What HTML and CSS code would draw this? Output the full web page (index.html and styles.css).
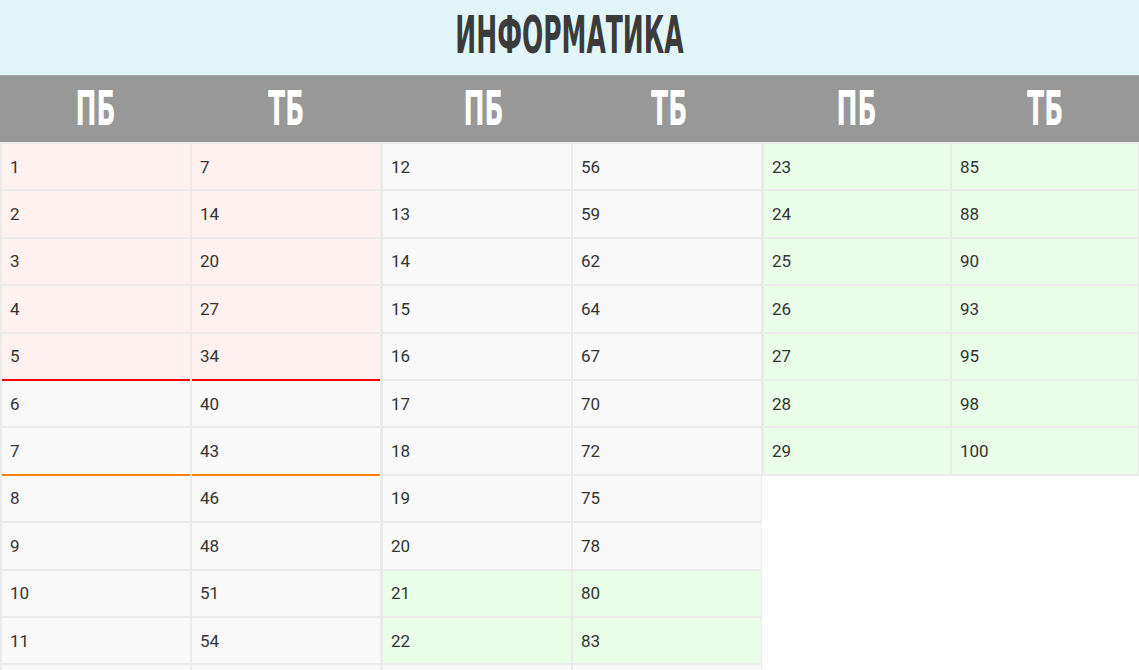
FILE: index.html
```html
<!DOCTYPE html>
<html lang="ru">
<head>
<meta charset="utf-8">
<title>Информатика</title>
<link rel="stylesheet" href="styles.css">
</head>
<body>
<header class="title-bar"><h1 class="title"><span class="squeeze squeeze--title">ИНФОРМАТИКА</span></h1></header>
<div class="head-row">
  <div class="head-group"><div class="head-cell"><span class="squeeze">ПБ</span></div><div class="head-cell"><span class="squeeze">ТБ</span></div></div>
  <div class="head-group head-group--mid"><div class="head-cell"><span class="squeeze">ПБ</span></div><div class="head-cell"><span class="squeeze">ТБ</span></div></div>
  <div class="head-group head-group--last"><div class="head-cell"><span class="squeeze">ПБ</span></div><div class="head-cell"><span class="squeeze">ТБ</span></div></div>
</div>
<main class="tables">
  <div class="tbl">
    <div class="c pink">1</div><div class="c pink">7</div>
    <div class="c pink">2</div><div class="c pink">14</div>
    <div class="c pink">3</div><div class="c pink">20</div>
    <div class="c pink">4</div><div class="c pink">27</div>
    <div class="c pink red-line">5</div><div class="c pink red-line">34</div>
    <div class="c">6</div><div class="c">40</div>
    <div class="c orange-line">7</div><div class="c orange-line">43</div>
    <div class="c">8</div><div class="c">46</div>
    <div class="c">9</div><div class="c">48</div>
    <div class="c">10</div><div class="c">51</div>
    <div class="c">11</div><div class="c">54</div>
    <div class="c"></div><div class="c"></div>
  </div>
  <div class="tbl">
    <div class="c">12</div><div class="c">56</div>
    <div class="c">13</div><div class="c">59</div>
    <div class="c">14</div><div class="c">62</div>
    <div class="c">15</div><div class="c">64</div>
    <div class="c">16</div><div class="c">67</div>
    <div class="c">17</div><div class="c">70</div>
    <div class="c">18</div><div class="c">72</div>
    <div class="c">19</div><div class="c">75</div>
    <div class="c">20</div><div class="c">78</div>
    <div class="c green">21</div><div class="c green">80</div>
    <div class="c green">22</div><div class="c green">83</div>
    <div class="c"></div><div class="c"></div>
  </div>
  <div class="tbl tbl--last">
    <div class="c green">23</div><div class="c green">85</div>
    <div class="c green">24</div><div class="c green">88</div>
    <div class="c green">25</div><div class="c green">90</div>
    <div class="c green">26</div><div class="c green">93</div>
    <div class="c green">27</div><div class="c green">95</div>
    <div class="c green">28</div><div class="c green">98</div>
    <div class="c green">29</div><div class="c green">100</div>
  </div>
</main>
</body>
</html>
```

FILE: styles.css
```css
*, *::before, *::after { box-sizing: border-box; }
html { overflow: hidden; }
body {
  margin: 0;
  background: #ffffff;
  font-family: Roboto, "Liberation Sans", sans-serif;
}
.title-bar {
  height: 76px;
  background: #e2f6f9;
  display: flex;
  align-items: center;
  justify-content: center;
  border-bottom: 1px solid #9fa9aa;
}
.title {
  margin: 0 0 4px;
  font-family: "DejaVu Sans Condensed", "DejaVu Sans", sans-serif;
  font-weight: bold;
  font-size: 51px;
  line-height: 1;
  color: #3b3b3b;
}
.squeeze {
  display: inline-block;
  transform: scaleX(0.58);
}
.squeeze--title { transform: scaleX(0.545); }
.head-row {
  height: 66px;
  background: #989898;
  display: flex;
}
.head-group {
  flex: 0 0 381px;
  display: flex;
}
.head-group--mid { padding-left: 10px; }
.head-group--last { flex: 1 1 auto; }
.head-cell {
  flex: 1;
  display: flex;
  align-items: center;
  justify-content: center;
  font-family: "DejaVu Sans Condensed", "DejaVu Sans", sans-serif;
  font-weight: bold;
  font-size: 48px;
  color: #ffffff;
  line-height: 1;
  padding-bottom: 2px;
}
.tables {
  display: flex;
  align-items: flex-start;
}
.tbl {
  flex: 0 0 381px;
  min-width: 0;
  display: grid;
  grid-template-columns: 1fr 1fr;
  grid-auto-rows: 45.4px;
  gap: 2px;
  padding: 2px 1px 2px 2px;
  background: #ebebeb;
}
.tbl--last { flex: 1 1 auto; }
.c {
  background: #f9f9f9;
  display: flex;
  align-items: center;
  padding-left: 8px;
  font-size: 17px;
  color: #333333;
}
.pink { background: #fff1f0; }
.green { background: #e9fde9; }
.red-line { box-shadow: 0 2px 0 #ff0000; }
.orange-line { box-shadow: 0 2px 0 #ff7f0a; }
```
